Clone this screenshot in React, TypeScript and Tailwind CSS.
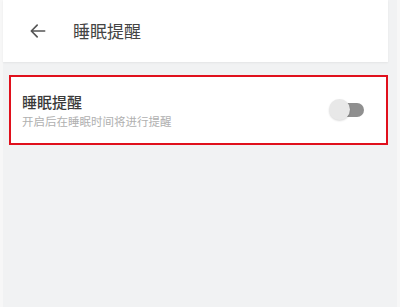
// Sleep reminder settings screen

import React from 'react'

const BackArrow: React.FC = () => (
  <svg width="20" height="20" viewBox="0 0 24 24" fill="none">
    <path
      d="M20 12H5M11 5l-7 7 7 7"
      stroke="#555"
      strokeWidth="2"
      strokeLinecap="round"
      strokeLinejoin="round"
    />
  </svg>
)

const Toggle: React.FC = () => (
  <div className="relative h-[22px] w-[35px]">
    <div className="absolute left-[11px] top-[4px] h-[14px] w-[24px] rounded-full bg-[#8f8f8f]" />
    <div className="absolute left-0 top-0 h-[21px] w-[21px] rounded-full bg-[#e8e8e8] shadow-[0_1px_2px_rgba(0,0,0,0.15)]" />
  </div>
)

export default function App() {
  return (
    <div
      className="flex h-[307px] w-[400px] flex-col border-l-[3px] border-r-[3px] border-[#f7f7f7] bg-[#f1f2f3]"
      style={{ fontFamily: '"Noto Sans CJK SC", "Noto Sans", sans-serif' }}
    >
      <div className="flex h-[62px] w-[385px] items-center bg-white shadow-[0_1px_2px_rgba(0,0,0,0.06)]">
        <div className="ml-[25px] flex items-center">
          <BackArrow />
        </div>
        <div className="ml-[25px] text-[17px] text-[#444]">睡眠提醒</div>
      </div>

      <div className="ml-[6px] mt-[13px] flex h-[70px] w-[379px] items-center border-2 border-[#e0101c] bg-white pl-[11px] pr-[22px]">
        <div className="flex flex-1 flex-col">
          <div className="text-[15px] font-medium leading-[20px] text-[#3a3a3a]">睡眠提醒</div>
          <div className="mt-[1px] text-[11.5px] leading-[16px] text-[#b0b0b0]">
            开启后在睡眠时间将进行提醒
          </div>
        </div>
        <Toggle />
      </div>
    </div>
  )
}
